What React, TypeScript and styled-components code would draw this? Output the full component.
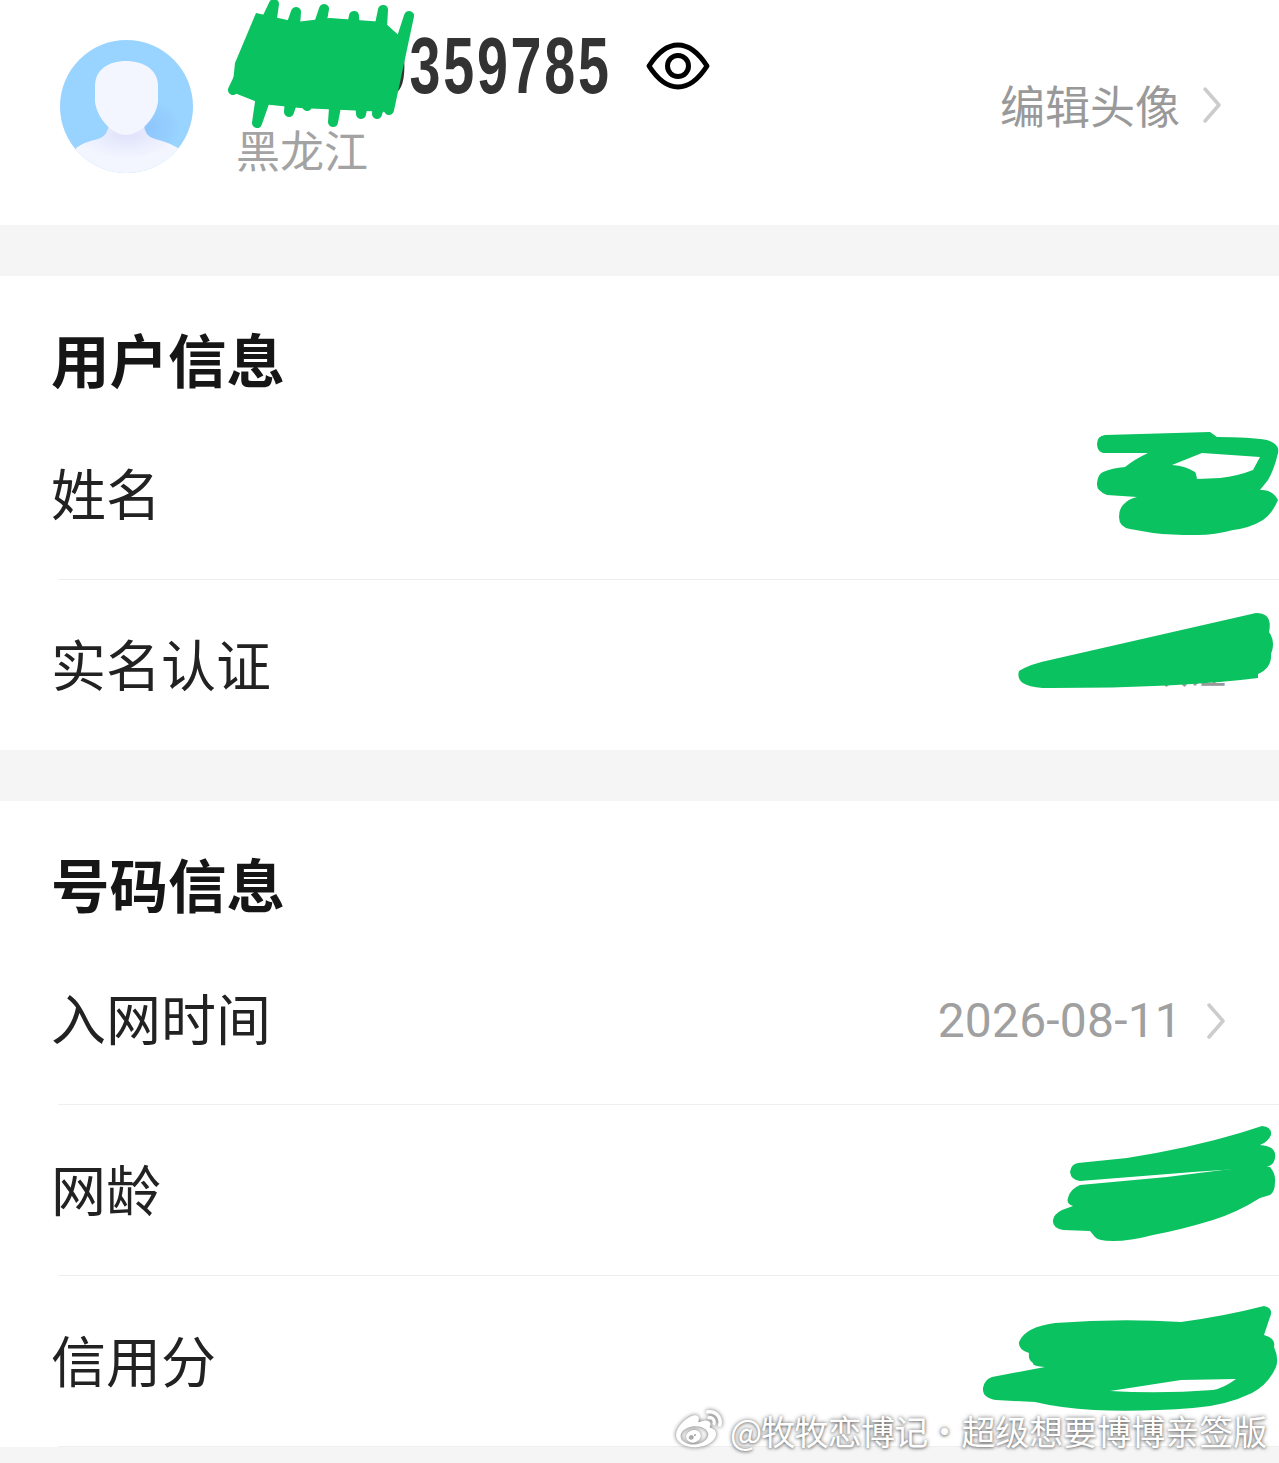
import styled, { createGlobalStyle } from 'styled-components'
import { FaWeibo } from 'react-icons/fa'

const GlobalStyle = createGlobalStyle`
  html, body {
    margin: 0;
    padding: 0;
    background: #fff;
  }
  body {
    font-family: "Noto Sans CJK SC", "Noto Sans", sans-serif;
  }
`

const Page = styled.div`
  position: relative;
  width: 1279px;
  height: 1463px;
  overflow: hidden;
  background: #fff;
  color: #1f1f1f;
`

const Header = styled.header`
  height: 225px;
  box-sizing: border-box;
  padding: 0 57px 13px 60px;
  display: flex;
  align-items: center;
`

const Avatar = styled.svg`
  width: 133px;
  height: 133px;
  flex: none;
`

const Info = styled.div`
  margin-left: 44px;
  padding-bottom: 13px;
  flex: 1;
  display: flex;
  flex-direction: column;
  gap: 18px;
`

const NumberRow = styled.div`
  display: flex;
  align-items: center;
  padding-left: 4px;
  height: 80px;
`

// no condensed family is installed, so the digits are squeezed sideways
const PhoneNumber = styled.span`
  display: block;
  width: 368px;
  flex: none;
  font-family: "Liberation Sans", sans-serif;
  font-weight: 700;
  font-size: 80px;
  line-height: 80px;
  letter-spacing: 4px;
  color: #333;
  white-space: nowrap;
  transform: scaleX(0.695);
  transform-origin: left center;
`

const EyeIcon = styled.svg`
  width: 64px;
  height: 48px;
  margin-left: 37px;
  flex: none;
`

const Region = styled.div`
  margin-left: -1px;
  font-size: 44px;
  line-height: 50px;
  color: #a3a3a3;
`

const EditLink = styled.div`
  display: flex;
  align-items: center;
  padding-bottom: 3px;
  font-size: 45px;
  line-height: 60px;
  color: #999;
`

const Chevron = styled.svg<{ $gap?: number }>`
  width: 20px;
  height: 40px;
  margin-left: ${props => props.$gap ?? 22}px;
  flex: none;
`

const Band = styled.div<{ $height?: number }>`
  height: ${props => props.$height ?? 51}px;
  background: #f5f5f5;
`

const SectionTitle = styled.h2`
  margin: 0;
  height: 133px;
  box-sizing: border-box;
  padding: 48px 0 0 51px;
  font-size: 58.5px;
  line-height: 68px;
  font-weight: 700;
  color: #161616;
`

const Row = styled.div`
  height: 170px;
  box-sizing: border-box;
  padding: 0 53px 0 51px;
  display: flex;
  align-items: center;
  justify-content: space-between;
`

const RowLabel = styled.span`
  padding-bottom: 6px;
  font-size: 55px;
  line-height: 70px;
  color: #222;
`

const RowValue = styled.span`
  display: flex;
  align-items: center;
  padding-top: 4px;
  font-family: "Roboto", "Noto Sans CJK SC", sans-serif;
  font-size: 48px;
  line-height: 60px;
  letter-spacing: 0.2px;
  color: #a0a0a0;
`

// sits almost fully under the scribble, only its lower edge shows
const CoveredValue = styled.span`
  padding-top: 4px;
  font-size: 38px;
  line-height: 50px;
  color: #999;
`

const Divider = styled.div`
  height: 1px;
  margin-left: 58px;
  background: #eeeeee;
`

const Scribbles = styled.svg`
  position: absolute;
  top: 0;
  left: 0;
  width: 1279px;
  height: 1463px;
  pointer-events: none;
`

const Watermark = styled.div`
  position: absolute;
  left: 676px;
  top: 1406px;
  display: flex;
  align-items: center;
  height: 48px;
  color: #fff;
  font-size: 34px;
  white-space: nowrap;
  text-shadow: 0 0 4px rgba(0, 0, 0, 0.55), 0 1px 3px rgba(0, 0, 0, 0.35);
`

const WatermarkLogo = styled.span`
  display: flex;
  font-size: 46px;
  margin-right: 8px;
  filter: drop-shadow(0 0 2px rgba(0, 0, 0, 0.6));
`

const WatermarkHandle = styled.span`
  letter-spacing: -0.8px;
`

const WatermarkDot = styled.span`
  width: 34px;
  text-align: center;
`

const ChevronLine = ({ gap }: { gap?: number }) => (
  <Chevron $gap={gap} viewBox="0 0 20 40">
    <path d="M3 4 L17 20 L3 36" fill="none" stroke="#cccccc" strokeWidth="3.5" strokeLinecap="round" strokeLinejoin="round" />
  </Chevron>
)

const green = '#0ac25f'

export default function App() {
  return (
    <Page>
      <GlobalStyle />
      <Header>
        <Avatar viewBox="0 0 133 133">
          <defs>
            <radialGradient id="glow" cx="0.68" cy="0.66" r="0.22">
              <stop offset="0" stopColor="#8ec6fc" />
              <stop offset="1" stopColor="#99d3ff" />
            </radialGradient>
            <radialGradient id="collar" cx="0.5" cy="0.2" r="0.5">
              <stop offset="0" stopColor="#dfe2fa" />
              <stop offset="1" stopColor="#f3f6ff" />
            </radialGradient>
            <clipPath id="disc">
              <circle cx="66.5" cy="66.5" r="66.5" />
            </clipPath>
          </defs>
          <circle cx="66.5" cy="66.5" r="66.5" fill="url(#glow)" />
          <g clipPath="url(#disc)">
            <path d="M16 108 Q24 102 38 99 Q48 96 49 84 L84 84 Q84 96 95 99 Q108 102 118 108 L118 133 L16 133 Z" fill="url(#collar)" />
            <path d="M35 46 C35 30 48 21 66 21 C84 21 98 30 98 46 L98 62 C96 78 80 95 66 95 C52 95 37 78 35 62 Z" fill="#f3f6ff" />
          </g>
        </Avatar>
        <Info>
          <NumberRow>
            <PhoneNumber>00000359785</PhoneNumber>
            <EyeIcon viewBox="0 0 64 48">
              <path d="M3 24 C12 10 21 3 32 3 C43 3 52 10 61 24 C52 38 43 45 32 45 C21 45 12 38 3 24 Z" fill="none" stroke="#000" strokeWidth="5" strokeLinejoin="round" />
              <circle cx="32" cy="24" r="10.5" fill="none" stroke="#000" strokeWidth="5" />
            </EyeIcon>
          </NumberRow>
          <Region>黑龙江</Region>
        </Info>
        <EditLink>
          编辑头像
          <ChevronLine />
        </EditLink>
      </Header>
      <Band />
      <section>
        <SectionTitle>用户信息</SectionTitle>
        <Row>
          <RowLabel>姓名</RowLabel>
        </Row>
        <Divider />
        <Row>
          <RowLabel>实名认证</RowLabel>
          <CoveredValue>已认证</CoveredValue>
        </Row>
      </section>
      <Band />
      <section>
        <SectionTitle>号码信息</SectionTitle>
        <Row>
          <RowLabel>入网时间</RowLabel>
          <RowValue>
            2026-08-11
            <ChevronLine gap={24} />
          </RowValue>
        </Row>
        <Divider />
        <Row>
          <RowLabel>网龄</RowLabel>
        </Row>
        <Divider />
        <Row>
          <RowLabel>信用分</RowLabel>
        </Row>
      </section>
      <Divider />
      <Band $height={18} />

      {/* hand-drawn redactions on top of the screenshot */}
      <Scribbles viewBox="0 0 1279 1463">
        <g fill="none" stroke={green} strokeWidth="10" strokeLinecap="round" strokeLinejoin="round">
          <path d="M233 90 L274 4 L257 123 L296 12 L289 112 L324 9 L307 106 L340 24 L333 122 L354 16 L361 114 L383 10 L377 114 L409 16 L389 110" />
        </g>
        <path d="M235 63 L256 13 L296 22 L330 18 L384 22 L404 40 L396 88 L388 112 L300 108 L262 104 L232 92 Z" fill={green} />

        <path
          fillRule="evenodd"
          d="M1097 444 Q1097 436 1105 435 L1210 432 L1217 437 Q1250 437 1267 440 Q1280 444 1278 453 Q1274 470 1268 480 L1260 490 Q1272 489 1278 500 Q1272 514 1263 520 Q1250 528 1233 530 Q1215 535 1197 535 Q1170 535 1153 533 L1130 529 Q1119 527 1119 517 Q1119 509 1123 505 Q1128 499 1137 497 L1107 495 Q1096 491 1097 483 Q1098 474 1103 472 Q1112 468 1125 467 Q1135 459 1148 453 L1103 453 Q1097 451 1097 444 Z M1172 465 L1202 453 L1260 457 L1253 470 Q1238 476 1220 478 L1197 479 Q1196 473 1195 472 Q1186 466 1172 465 Z"
          fill={green}
        />
        <path d="M1019 671 Q1030 664 1050 660 L1256 613 Q1273 613 1269 632 Q1276 642 1271 654 Q1272 668 1258 674 L1258 678 Q1180 688 1050 688 Q1014 688 1019 671 Z" fill={green} />

        <path d="M1070 1172 Q1071 1164 1078 1163 L1127 1158 Q1190 1148 1240 1133 L1262 1126 Q1272 1127 1271 1135 Q1268 1142 1260 1145 Q1277 1146 1275 1158 Q1274 1165 1267 1167 L1193 1172 L1080 1181 Q1071 1180 1070 1172 Z" fill={green} />
        <path d="M1068 1198 Q1070 1189 1080 1185 L1167 1177 L1247 1167 L1270 1167 Q1276 1174 1275 1182 Q1275 1192 1270 1195 L1260 1198 Q1238 1212 1213 1220 Q1180 1230 1153 1235 Q1130 1241 1113 1241 Q1098 1241 1095 1237 L1090 1231 L1063 1230 Q1052 1228 1053 1220 Q1054 1214 1062 1210 L1073 1206 Q1066 1204 1068 1198 Z" fill={green} />

        <path fillRule="evenodd" d="M1019 1342 Q1025 1327 1055 1323 Q1120 1318 1181 1322 Q1225 1316 1264 1306 Q1274 1308 1270 1317 L1264 1335 Q1276 1338 1274 1347 Q1279 1358 1276 1367 Q1268 1385 1252 1393 Q1225 1406 1193 1408 Q1140 1412 1094 1410 Q1060 1408 1035 1402 L996 1400 Q982 1398 983 1388 Q984 1380 992 1377 L1045 1367 Q1032 1366 1033 1363 Q1028 1360 1029 1353 Q1018 1350 1019 1342 Z M1110 1391 L1181 1380 L1236 1379 Q1224 1388 1213 1390 Q1160 1394 1110 1391 Z" fill={green} />
      </Scribbles>

      <Watermark>
        <WatermarkLogo>
          <FaWeibo />
        </WatermarkLogo>
        <WatermarkHandle>@牧牧恋博记</WatermarkHandle>
        <WatermarkDot>·</WatermarkDot>
        <span>超级想要博博亲签版</span>
      </Watermark>
    </Page>
  )
}
